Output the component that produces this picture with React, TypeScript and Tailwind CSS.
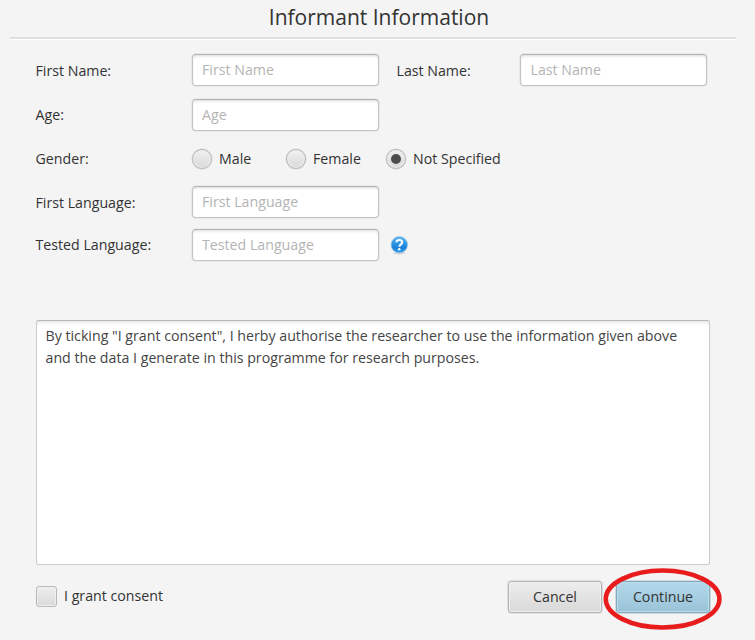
import React from "react";

const fieldClass =
  "block h-8 w-[187px] rounded-[4px] border border-[#c4c4c4] border-t-[#b4b4b4] bg-white px-[9.5px] pb-px text-[14.2px] text-[#333] shadow-[inset_0_2px_3px_-1px_#d8d8d8,0_0_0_0.5px_#dddddd] outline-none placeholder:text-[#b4b4b4]";

function Label({ children, className = "" }: { children: React.ReactNode; className?: string }) {
  return <label className={`w-[156px] shrink-0 whitespace-nowrap ${className}`}>{children}</label>;
}

function Radio({ label, checked = false, className }: { label: string; checked?: boolean; className: string }) {
  return (
    <label className={`flex items-center ${className}`}>
      <span className="flex size-[20px] shrink-0 items-center justify-center rounded-full border border-[#b7b7b7] bg-linear-to-b from-[#f0f0f0] to-[#dadada] shadow-[inset_0_0_0_1px_#f0f0f0,0_0_0_0.5px_#d2d2d2]">
        {checked && <span className="size-[10px] rounded-full bg-[#4c4c4c]" />}
      </span>
      <span className="ml-[7.5px] whitespace-nowrap">{label}</span>
    </label>
  );
}

function HelpIcon() {
  return (
    <svg className="ml-[11px] size-[19px]" viewBox="0 0 19 19">
      <defs>
        <linearGradient id="help" x1="0" y1="0" x2="0" y2="1">
          <stop offset="0" stopColor="#65b7ef" />
          <stop offset="0.45" stopColor="#2b93e4" />
          <stop offset="0.7" stopColor="#1b7fd6" />
          <stop offset="1" stopColor="#35aaed" />
        </linearGradient>
      </defs>
      <ellipse cx="9.3" cy="17.2" rx="6" ry="1.2" fill="#d6d6d6" />
      <circle cx="9.3" cy="8.7" r="8.2" fill="url(#help)" stroke="#8cc1e6" strokeWidth="0.7" />
      <path d="M6.5 6.3C6.7 3.3 12.3 3.3 12.2 6.4C12.1 8.5 9.5 8.4 9.4 10.8" fill="none" stroke="#f4faff" strokeWidth="2.1" />
      <circle cx="9.2" cy="13.2" r="1.3" fill="#f4faff" />
    </svg>
  );
}

export default function App() {
  return (
    <main className="relative flex h-[640px] w-[755px] flex-col overflow-hidden bg-[#f4f4f4] font-['Open_Sans','Noto_Sans',sans-serif] text-[14.2px] leading-[22px] text-[#333]">
      <header className="mr-[19px] ml-[10px] h-[40px] shrink-0">
        <h1 className="h-[37px] pt-[2px] pl-[12px] text-center text-[21px] leading-[30px]">Informant Information</h1>
        <div className="h-[3px] border-b border-white bg-[#dedede]" />
      </header>
      <form className="ml-[35.5px] flex w-[674.5px] flex-col">
        <div className="mt-[14px] flex h-8 items-center">
          <Label className="pt-px">First Name:</Label>
          <input className={fieldClass} placeholder="First Name" />
          <label className="ml-[18px] w-[123.5px] pt-px">Last Name:</label>
          <input className={fieldClass} placeholder="Last Name" />
        </div>
        <div className="mt-[13px] flex h-8 items-center">
          <Label>Age:</Label>
          <input className={fieldClass} placeholder="Age" />
        </div>
        <div className="mt-3 flex h-8 items-center">
          <Label>Gender:</Label>
          <Radio label="Male" className="w-[94px]" />
          <Radio label="Female" className="w-[100px]" />
          <Radio label="Not Specified" checked className="w-[130px]" />
        </div>
        <div className="mt-[11px] flex h-8 items-center">
          <Label className="pt-px">First Language:</Label>
          <input className={fieldClass} placeholder="First Language" />
        </div>
        <div className="mt-[11px] flex h-8 items-center">
          <Label>Tested Language:</Label>
          <input className={fieldClass} placeholder="Tested Language" />
          <HelpIcon />
        </div>
        <section className="mt-[59px] h-[245px] rounded-[3px] border border-[#cccccc] border-t-[#b6b8b6] bg-white px-[9px] pt-1 text-[#454545] shadow-[inset_0_4px_4px_-3px_#ddd]">
          <p className="whitespace-nowrap">By ticking "I grant consent", I herby authorise the researcher to use the information given above</p>
          <p className="whitespace-nowrap">and the data I generate in this programme for research purposes.</p>
        </section>
        <footer className="mt-4 flex h-8 items-center">
          <span className="-mt-px size-[21px] rounded-[3px] border border-[#b8b8b8] bg-linear-to-b from-[#eeeeee] to-[#dadada] shadow-[inset_0_0_0_1px_#efefef]" />
          <span className="-mt-[2px] ml-[7.5px]">I grant consent</span>
          <button type="button" className="ml-auto h-8 w-[94px] rounded-[3px] border border-[#b5b5b5] bg-linear-to-b from-[#ededed] to-[#d9d9d9] shadow-[inset_0_0_0_1px_#f0f0f0,0_0_0_0.5px_#cccccc]">Cancel</button>
          <button type="button" className="ml-[14px] h-8 w-[94px] rounded-[3px] border border-[#84aabc] bg-linear-to-b from-[#b2d9ea] to-[#9bc3d8] shadow-[inset_0_0_0_1px_#b9dbea,0_0_0_0.5px_#a9c2ce]">Continue</button>
        </footer>
      </form>
      <svg className="pointer-events-none absolute top-[567px] left-[603px] h-[64px] w-[120px]" viewBox="0 0 120 64">
        <ellipse cx="59.6" cy="32" rx="56.8" ry="28.5" fill="none" stroke="#e81c1c" strokeWidth="4.6" />
      </svg>
    </main>
  );
}
